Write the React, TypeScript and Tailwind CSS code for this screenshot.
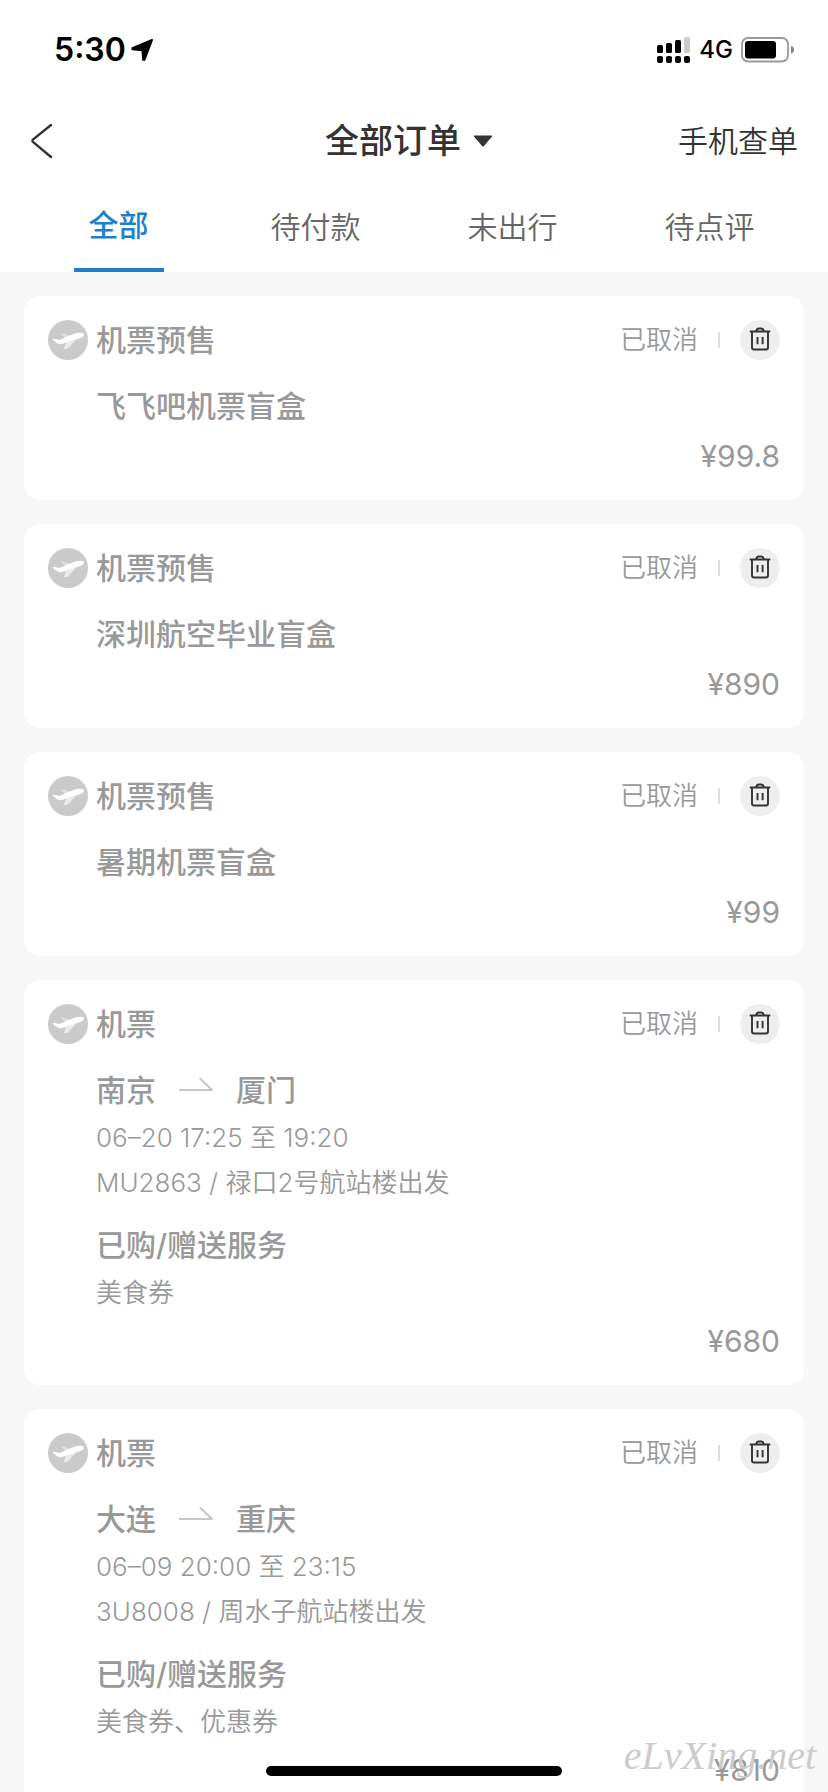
type Flight = {
  from: string;
  to: string;
  time: string;
  detail: string;
  services: string;
};

type Order = {
  id: number;
  category: string;
  title?: string;
  flight?: Flight;
  status: string;
  price: string;
};

const tabs = ["全部", "待付款", "未出行", "待点评"];

const orders: Order[] = [
  { id: 1, category: "机票预售", title: "飞飞吧机票盲盒", status: "已取消", price: "¥99.8" },
  { id: 2, category: "机票预售", title: "深圳航空毕业盲盒", status: "已取消", price: "¥890" },
  { id: 3, category: "机票预售", title: "暑期机票盲盒", status: "已取消", price: "¥99" },
  {
    id: 4,
    category: "机票",
    flight: {
      from: "南京",
      to: "厦门",
      time: "06–20 17:25 至 19:20",
      detail: "MU2863 / 禄口2号航站楼出发",
      services: "美食券",
    },
    status: "已取消",
    price: "¥680",
  },
  {
    id: 5,
    category: "机票",
    flight: {
      from: "大连",
      to: "重庆",
      time: "06–09 20:00 至 23:15",
      detail: "3U8008 / 周水子航站楼出发",
      services: "美食券、优惠券",
    },
    status: "已取消",
    price: "¥810",
  },
];

function LocationIcon() {
  return (
    <svg width="24" height="24" viewBox="0 0 24 24" aria-hidden="true">
      <path
        d="M22 2 2.400 10.200v1l10 1 .8 9.600h1.200z"
        fill="#000"
        stroke="#000"
        strokeWidth="2"
        strokeLinejoin="round"
      />
    </svg>
  );
}

function SignalIcon() {
  return (
    <svg width="34" height="26" viewBox="0 0 34 26" aria-hidden="true">
      <rect x="0" y="8" width="6" height="8" rx="1.6" />
      <rect x="9" y="6" width="6" height="10" rx="1.6" />
      <rect x="18" y="3" width="6" height="13" rx="1.6" />
      <rect x="27" y="0" width="6" height="16" rx="1.6" fill="#cccccc" />
      <rect x="0" y="19" width="6" height="7" rx="2" />
      <rect x="9" y="19" width="6" height="7" rx="2" />
      <rect x="18" y="19" width="6" height="7" rx="2" />
      <rect x="27" y="19" width="6" height="7" rx="2" />
    </svg>
  );
}

function BatteryIcon() {
  return (
    <svg width="54" height="26" viewBox="0 0 54 26" aria-hidden="true">
      <rect x="1" y="1" width="46" height="23.5" rx="6" fill="none" stroke="#999999" strokeWidth="1.8" />
      <rect x="4" y="4" width="31" height="17.4" rx="3" fill="#000" />
      <path d="M50 8.8c2 .6 3 2 3 4s-1 3.400-3 4z" fill="#888888" />
    </svg>
  );
}

function PlaneIcon() {
  return (
    <svg className="size-10 shrink-0" viewBox="0 0 40 40" aria-hidden="true">
      <circle cx="20" cy="20" r="20" fill="#cacaca" />
      <path d="M12.600 13.800 15 13.600 22 15.800 18 18z" fill="#e0e0e0" />
      <path d="M18.500 21.500 28 19.500 20 28.600 15.600 29.400z" fill="#ebebeb" />
      <path
        d="M4.300 19.300c.6-.7 1.800-.8 2.600-.5L11.400 20 17 17.600l10-4c2.600-.9 6.600-1.400 8.200-.3 1.400 1 1 2.700-.5 3.700-2 1.300-5 2-8 2.700L14 24c-1.500.4-3 .4-4.200-.4-2.300-1.300-4.200-2.800-5.500-4.300z"
        fill="#fff"
      />
    </svg>
  );
}

function TrashIcon() {
  return (
    <svg className="size-10" viewBox="0 0 40 40" fill="none" stroke="#333333" strokeWidth="1.9" aria-hidden="true">
      <path d="M10.500 11.500h19" strokeLinecap="round" />
      <path d="M16.200 11.200c.4-1.800 1.200-2.700 2.500-2.700h2.600c1.300 0 2.100.9 2.500 2.700" />
      <path d="M12 11.800v15.700c0 1.300.7 2 2 2h12c1.300 0 2-.7 2-2V11.800" />
      <path d="M17.500 17v7.200M22.600 17v7.200" />
    </svg>
  );
}

function RouteArrow() {
  return (
    <svg width="34" height="26" viewBox="0 0 34 26" fill="none" stroke="#c8c8c8" strokeWidth="2.2" aria-hidden="true">
      <path d="M1 13h32L21.500 2" strokeLinecap="round" strokeLinejoin="round" />
    </svg>
  );
}

function StatusBar() {
  return (
    <div className="flex h-[100px] items-center justify-between pr-[33px] pl-[54px] text-black">
      <div className="flex items-center gap-1">
        <span className="text-[32px] leading-10 font-semibold">5:30</span>
        <LocationIcon />
      </div>
      <div className="flex items-center gap-2">
        <SignalIcon />
        <span className="text-2xl leading-8 font-medium">4G</span>
        <BatteryIcon />
      </div>
    </div>
  );
}

function NavBar() {
  return (
    <div className="grid h-[82px] grid-cols-[1fr_auto_1fr] items-center px-[30px] text-[#333333]">
      <button type="button" aria-label="返回" className="flex w-10 items-center">
        <svg width="24" height="36" viewBox="0 0 24 36" fill="none" stroke="#333333" strokeWidth="2.4" aria-hidden="true">
          <path d="M21 2 3.200 16.400q-1.600 1.400 0 2.800L21 34" strokeLinecap="round" />
        </svg>
      </button>
      <button type="button" className="flex items-center gap-3 pr-[10px]">
        <h1 className="text-[34px] leading-10 font-medium">全部订单</h1>
        <svg width="20" height="12" viewBox="0 0 20 12" aria-hidden="true">
          <path d="M1.200.5h17.600q.8.2.2 1L11 11q-1 1-2 0L1 1.500Q.5.700 1.200.5z" fill="#333333" />
        </svg>
      </button>
      <a href="#lookup" className="justify-self-end text-[30px] leading-10 font-[350]">
        手机查单
      </a>
    </div>
  );
}

function Tabs() {
  return (
    <nav className="grid h-[90px] grid-cols-4 px-5">
      {tabs.map((tab, i) => (
        <button
          key={tab}
          type="button"
          aria-current={i === 0 ? "page" : undefined}
          className={
            i === 0
              ? "mx-auto w-[90px] border-b-4 border-[#1c80d0] text-[30px] font-medium text-[#1c80d0]"
              : "text-[30px] font-[350] text-[#666666]"
          }
        >
          {tab}
        </button>
      ))}
    </nav>
  );
}

function OrderCard({ order }: { order: Order }) {
  const { flight } = order;
  return (
    <article className="rounded-2xl bg-white p-6 text-[#999999]">
      <header className="flex h-10 items-center">
        <PlaneIcon />
        <h2 className="ml-2 flex-1 text-[30px] leading-10 font-medium">{order.category}</h2>
        <span className="text-[26px] leading-10 font-[350]">{order.status}</span>
        <span className="mx-5 h-4 w-0.5 bg-[#dddddd]" />
        <button type="button" aria-label="删除订单" className="rounded-full bg-[#eeeeee]">
          <TrashIcon />
        </button>
      </header>
      <div className="mt-[26px] pl-12">
        {order.title && <p className="mb-[10px] text-[30px] leading-10 font-medium">{order.title}</p>}
        {flight && (
          <div className="mb-[6px]">
            <p className="mb-[5px] flex items-center gap-[23px] text-[30px] leading-10 font-medium">
              <span>{flight.from}</span>
              <RouteArrow />
              <span>{flight.to}</span>
            </p>
            <p className="text-[26px] leading-[45px] font-[350]">{flight.time}</p>
            <p className="text-[26px] leading-[45px] font-[350]">{flight.detail}</p>
            <h3 className="mt-5 mb-[5px] text-[30px] leading-10 font-medium">已购/赠送服务</h3>
            <p className="text-[26px] leading-[45px] font-[350]">{flight.services}</p>
          </div>
        )}
      </div>
      <p className="text-right text-[30px] leading-10">{order.price}</p>
    </article>
  );
}

export default function App() {
  return (
    <div className="relative flex h-screen flex-col overflow-hidden bg-[#f7f7f7] font-['Inter','Noto_Sans_CJK_SC',sans-serif]">
      <div className="shrink-0 bg-white">
        <StatusBar />
        <NavBar />
        <Tabs />
      </div>
      <main className="flex min-h-0 flex-1 flex-col gap-6 overflow-y-auto p-6 [scrollbar-width:none]">
        {orders.map((order) => (
          <OrderCard key={order.id} order={order} />
        ))}
      </main>
      <div className="absolute bottom-4 left-1/2 h-[10px] w-[296px] -translate-x-1/2 rounded-full bg-black" />
      <span className="absolute right-3 bottom-4 font-['Liberation_Serif',serif] text-[40px] leading-10 text-[#cccccc] italic">
        eLvXing.net
      </span>
    </div>
  );
}
